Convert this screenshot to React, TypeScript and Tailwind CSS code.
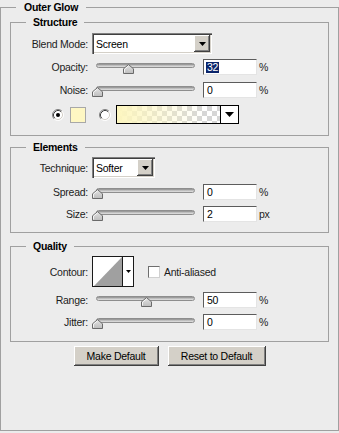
import React from "react";

const LBL = "w-[77px] shrink-0 text-right text-[#1c1c1c]";
const SUNKEN =
  "shadow-[inset_1px_1px_0_#808080,inset_2px_2px_0_#404040,inset_-1px_-1px_0_#ffffff,inset_-2px_-2px_0_#d4d0c8]";
const RAISED =
  "shadow-[inset_-1px_-1px_0_#404040,inset_1px_1px_0_#ffffff,inset_-2px_-2px_0_#808080]";

function DownTri({ w = 7, h = 4 }: { w?: number; h?: number }) {
  return (
    <svg width={w} height={h} viewBox={`0 0 ${w} ${h}`}>
      <path d={`M0 0H${w}L${w / 2} ${h}Z`} fill="#000" />
    </svg>
  );
}

function Thumb() {
  return (
    <svg width="11" height="10" viewBox="0 0 11 10">
      <defs>
        <linearGradient id="tg" x1="0" y1="0" x2="0" y2="1">
          <stop offset="0" stopColor="#e4e4e4" />
          <stop offset="1" stopColor="#bdbdbd" />
        </linearGradient>
      </defs>
      <path d="M0.5 9.5V4.8L5.5 0.6L10.5 4.8V9.5Z" fill="url(#tg)" stroke="#6a6a6a" />
      <path d="M1.5 8.5V5.2L5.5 1.9" fill="none" stroke="#ffffff" strokeWidth="0.8" />
    </svg>
  );
}

function Slider({ value }: { value: number }) {
  return (
    <div className="relative h-[16px] w-[107px] shrink-0">
      <div className="absolute left-[4px] right-[4px] top-[4px] h-[5px] rounded-[3px] border border-[#8e8e8e] bg-[linear-gradient(#8a8a8a,#c4c4c4_55%,#e2e2e2)]" />
      <div className="absolute top-[5px] flex" style={{ left: `${Math.round(value * 0.97)}px` }}>
        <Thumb />
      </div>
    </div>
  );
}

function NumInput({ value, selected }: { value: string; selected?: boolean }) {
  return (
    <div className="flex h-[16px] w-[54px] shrink-0 items-center border border-b-[#e4e4e4] border-l-[#5c5c5c] border-r-[#e4e4e4] border-t-[#5c5c5c] bg-white pl-[2px] text-black">
      {selected ? (
        <span className="flex h-[11px] items-center bg-[#0a246a] px-[1px] text-white">{value}</span>
      ) : (
        <span className="pl-[1px]">{value}</span>
      )}
    </div>
  );
}

function SliderRow({
  label,
  value,
  text,
  unit,
  selected,
  mt,
}: {
  label: string;
  value: number;
  text: string;
  unit: string;
  selected?: boolean;
  mt: string;
}) {
  return (
    <div className={`flex h-[16px] items-center ${mt}`}>
      <div className={LBL}>{label}</div>
      <div className="ml-[4px] flex">
        <Slider value={value} />
      </div>
      <div className="ml-[4px] flex">
        <NumInput value={text} selected={selected} />
      </div>
      <div className="ml-[2px] text-[#1c1c1c]">{unit}</div>
    </div>
  );
}

function Dropdown({ text, wClass }: { text: string; wClass: string }) {
  return (
    <div className={`flex h-[21px] ${wClass} items-stretch bg-white p-[2px] ${SUNKEN}`}>
      <div className="flex flex-1 items-center pl-[2px] text-black">{text}</div>
      <div className={`flex w-[16px] items-center justify-center bg-[#d4d0c8] ${RAISED}`}>
        <DownTri />
      </div>
    </div>
  );
}

function Radio({ checked }: { checked?: boolean }) {
  return (
    <svg width="12" height="12" viewBox="0 0 12 12">
      <circle cx="6" cy="6" r="5" fill="#ffffff" />
      <path d="M2.11 9.89A5.5 5.5 0 0 1 9.89 2.11" fill="none" stroke="#808080" />
      <path d="M9.89 2.11A5.5 5.5 0 0 1 2.11 9.89" fill="none" stroke="#ffffff" />
      <path d="M2.82 9.18A4.5 4.5 0 0 1 9.18 2.82" fill="none" stroke="#404040" />
      <path d="M9.18 2.82A4.5 4.5 0 0 1 2.82 9.18" fill="none" stroke="#d4d0c8" />
      {checked && <circle cx="6" cy="6" r="2" fill="#000" />}
    </svg>
  );
}

function GradientPreview() {
  return (
    <svg width="103" height="17" viewBox="0 0 103 17">
      <defs>
        <pattern id="chk" width="10" height="10" patternUnits="userSpaceOnUse">
          <rect width="10" height="10" fill="#ffffff" />
          <rect width="5" height="5" fill="#d6d6d6" />
          <rect x="5" y="5" width="5" height="5" fill="#d6d6d6" />
        </pattern>
        <linearGradient id="glow" x1="0" y1="0" x2="1" y2="0">
          <stop offset="0" stopColor="#fdf6bf" stopOpacity="1" />
          <stop offset="0.85" stopColor="#fdf6bf" stopOpacity="0" />
        </linearGradient>
      </defs>
      <rect width="103" height="17" fill="url(#chk)" />
      <rect width="103" height="17" fill="url(#glow)" />
    </svg>
  );
}

function ContourPreview() {
  return (
    <svg width="29" height="29" viewBox="0 0 29 29">
      <rect width="29" height="29" fill="#ffffff" />
      <path d="M1 29L29 0V29Z" fill="#a0a0a0" />
    </svg>
  );
}

export default function App() {
  return (
    <div className="h-[433px] w-[339px] bg-[#ececec] font-['Liberation_Sans',Arial,sans-serif] text-[10.5px] leading-[14px] tracking-[-0.25px]">
      <fieldset className="h-[431px] w-[339px] border border-[#a0a0a0]">
        <legend className="ml-[15px] px-[8px] font-bold leading-[14px] text-black">Outer Glow</legend>

        {/* Structure */}
        <fieldset className="ml-[9px] mt-[1px] w-[319px] border border-[#a0a0a0] pb-[11px]">
          <legend className="ml-[15px] px-[7px] font-bold leading-[14px] text-black">Structure</legend>
          <div className="mt-[4px] flex h-[21px] items-center">
            <div className={LBL}>Blend Mode:</div>
            <div className="ml-[4px] flex">
              <Dropdown text="Screen" wClass="w-[120px]" />
            </div>
          </div>
          <SliderRow label="Opacity:" value={32} text="32" unit="%" selected mt="mt-[5px]" />
          <SliderRow label="Noise:" value={0} text="0" unit="%" mt="mt-[7px]" />
          <div className="mt-[7px] flex h-[19px] items-center pl-[41px]">
            <Radio checked />
            <div className="ml-[6px] h-[16px] w-[16px] border border-[#a8a8a8] bg-[#fef7c3]" />
            <div className="ml-[13px] flex">
              <Radio />
            </div>
            <div className="ml-[5px] flex h-[19px] w-[123px] border border-black bg-white">
              <GradientPreview />
              <div className="w-[1px] bg-black" />
              <div className="flex flex-1 items-center justify-center">
                <DownTri w={9} h={5} />
              </div>
            </div>
          </div>
        </fieldset>

        {/* Elements */}
        <fieldset className="ml-[9px] mt-[4px] w-[319px] border border-[#a0a0a0] pb-[10px]">
          <legend className="ml-[15px] px-[7px] font-bold leading-[14px] text-black">Elements</legend>
          <div className="mt-[3px] flex h-[21px] items-center">
            <div className={LBL}>Technique:</div>
            <div className="ml-[4px] flex">
              <Dropdown text="Softer" wClass="w-[63px]" />
            </div>
          </div>
          <SliderRow label="Spread:" value={0} text="0" unit="%" mt="mt-[6px]" />
          <SliderRow label="Size:" value={0} text="2" unit="px" mt="mt-[6px]" />
        </fieldset>

        {/* Quality */}
        <fieldset className="ml-[9px] mt-[6px] w-[319px] border border-[#a0a0a0] pb-[11px]">
          <legend className="ml-[15px] px-[7px] font-bold leading-[14px] text-black">Quality</legend>
          <div className="mt-[3px] flex h-[31px] items-center">
            <div className={LBL}>Contour:</div>
            <div className="ml-[4px] flex h-[31px] w-[42px] border border-[#1a1a1a] bg-white">
              <ContourPreview />
              <div className="w-[1px] bg-[#1a1a1a]" />
              <div className="flex flex-1 items-center justify-center">
                <DownTri w={5} h={3} />
              </div>
            </div>
            <div className="ml-[14px] h-[12px] w-[12px] border border-b-[#d0d0d0] border-l-[#6e6e6e] border-r-[#d0d0d0] border-t-[#6e6e6e] bg-white" />
            <div className="ml-[4px] text-[#1c1c1c]">Anti-aliased</div>
          </div>
          <SliderRow label="Range:" value={50} text="50" unit="%" mt="mt-[5px]" />
          <SliderRow label="Jitter:" value={0} text="0" unit="%" mt="mt-[6px]" />
        </fieldset>

        <div className="mt-[4px] flex justify-center gap-[9px]">
          <button className={`h-[20px] w-[85px] bg-[#d4d0c8] text-black ${RAISED}`}>Make Default</button>
          <button className={`h-[20px] w-[98px] bg-[#d4d0c8] text-black ${RAISED}`}>Reset to Default</button>
        </div>
      </fieldset>
    </div>
  );
}
